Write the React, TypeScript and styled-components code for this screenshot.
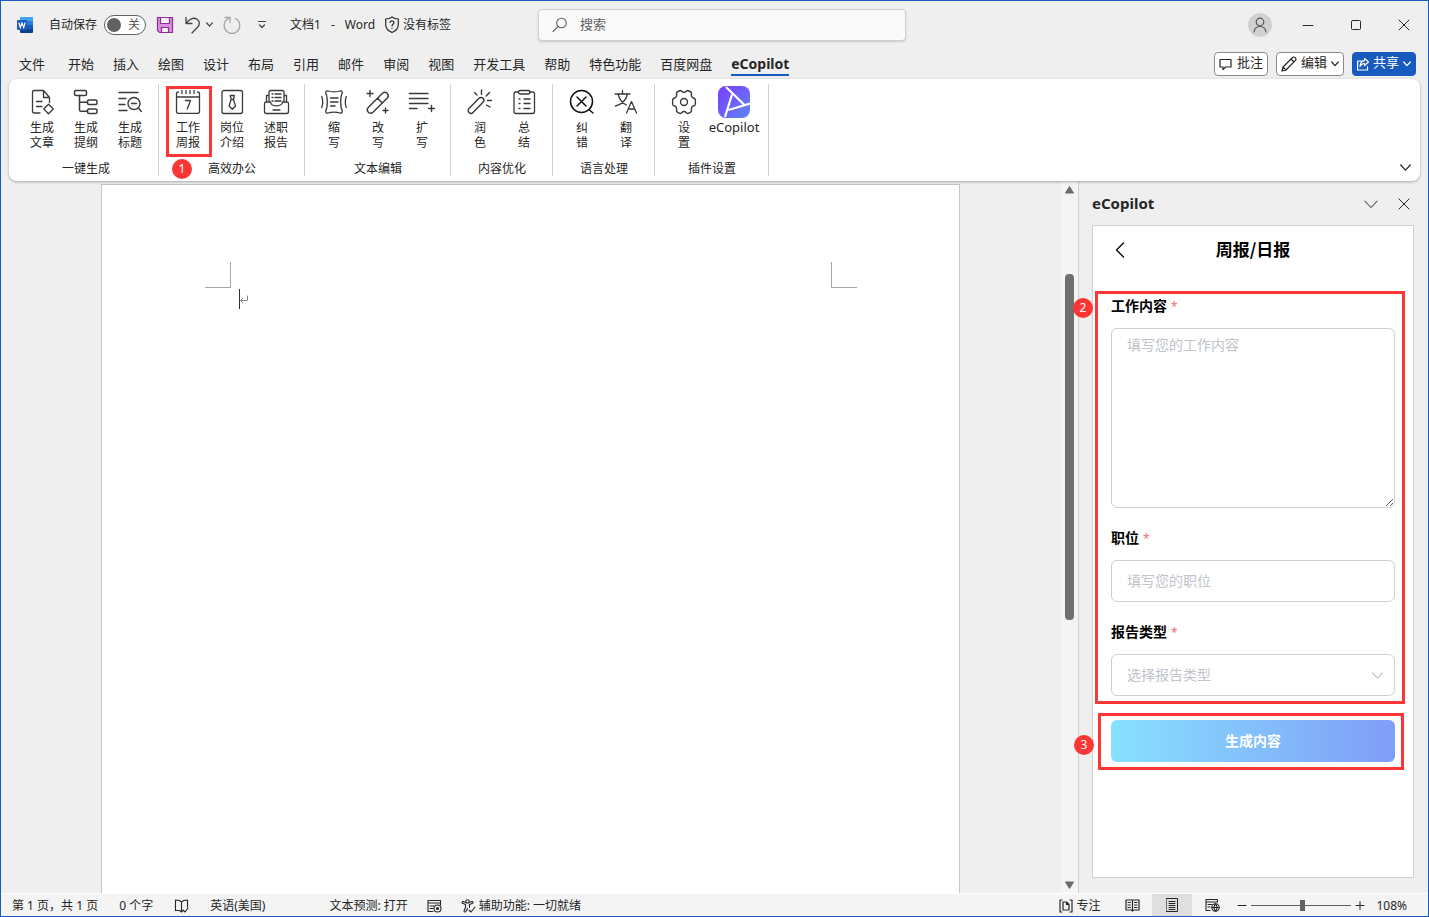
import React from "react";
import styled, { createGlobalStyle, css } from "styled-components";

const GlobalStyle = createGlobalStyle`
  *, *::before, *::after { box-sizing: border-box; }
  body {
    margin: 0;
    background: #efefef;
    color: #262626;
    font: 12px/16px "Noto Sans", "Noto Sans CJK SC", sans-serif;
  }
  button, input, textarea, select { font: inherit; color: inherit; }
  button { background: none; border: 0; padding: 0; cursor: pointer; }
  svg { display: block; flex: none; }
`;

const BLUE = "#185abd";
const RED = "#fc3535";

const Window = styled.div`
  height: 100vh;
  min-height: 560px;
  border: 1px solid ${BLUE};
  display: flex;
  flex-direction: column;
  overflow: hidden;
`;

const Icon = styled.svg<{ $w?: number }>`
  fill: none;
  stroke: currentColor;
  stroke-width: ${(p) => p.$w ?? 1};
  stroke-linecap: round;
  stroke-linejoin: round;
`;

/* Title bar */

const TitleBar = styled.header`
  display: flex;
  align-items: center;
  height: 47px;
  padding-left: 15px;
`;

const TitleSide = styled.div`
  flex: 1 0 0;
  display: flex;
  align-items: center;
  white-space: nowrap;
`;

const AutoSave = styled.label`
  display: flex;
  align-items: center;
  gap: 7px;
  margin-left: 15px;
`;

const Switch = styled.span`
  position: relative;
  display: flex;
  align-items: center;
  justify-content: flex-end;
  width: 42px;
  height: 20px;
  padding-right: 5px;
  border: 1px solid #616161;
  border-radius: 10px;
  background: #fff;
  color: #555;

  input {
    appearance: none;
    position: absolute;
    left: 2px;
    top: 2px;
    width: 14px;
    height: 14px;
    margin: 0;
    border-radius: 50%;
    background: #616161;
  }
`;

const QuickBar = styled.div`
  display: flex;
  align-items: center;
  gap: 10px;
  margin-left: 10px;
`;

const QuickButton = styled.button<{ $muted?: boolean }>`
  display: flex;
  align-items: center;
  justify-content: center;
  gap: 4px;
  min-width: 18px;
  height: 24px;
  color: ${(p) => (p.$muted ? "#a6a6a6" : "#444")};
`;

const DocTitle = styled.div`
  display: flex;
  align-items: center;
  gap: 10px;
  margin-left: 17px;
`;

const SensitivityLabel = styled.button`
  display: flex;
  align-items: center;
  gap: 4px;
`;

const SearchBox = styled.label`
  flex: 0 1 368px;
  display: flex;
  align-items: center;
  gap: 12px;
  height: 32px;
  padding: 0 13px;
  border: 1px solid #d1d1d1;
  border-radius: 4px;
  background: #fafafa;
  box-shadow: 0 1px 2px rgba(0, 0, 0, 0.16);
  color: #616161;

  input {
    flex: 1;
    min-width: 0;
    padding: 0 0 2px;
    border: 0;
    outline: 0;
    background: none;
    font-size: 13px;
  }
  input::placeholder { color: #616161; opacity: 1; }
`;

const Account = styled.button`
  display: grid;
  place-items: center;
  width: 24px;
  height: 24px;
  margin: 0 12px 0 auto;
  border-radius: 50%;
  background: #d1d1d1;
  color: #555;
`;

const WindowButton = styled.button`
  display: grid;
  place-items: center;
  width: 48px;
  height: 32px;
`;

/* Tabs */

const TabRow = styled.div`
  display: flex;
  align-items: center;
  justify-content: space-between;
  height: 31px;
  padding: 0 12px 0 18px;
`;

const Tabs = styled.nav`
  display: flex;
  gap: 19px;
  white-space: nowrap;
`;

const Tab = styled.a<{ $active?: boolean }>`
  padding: 5px 0 2px;
  border-bottom: 2px solid transparent;
  color: inherit;
  font-size: 13px;
  text-decoration: none;

  &:first-child { margin-right: 4px; }
  ${(p) =>
    p.$active &&
    css`
      border-color: ${BLUE};
      font-size: 14px;
      font-weight: 700;
    `}
`;

const Actions = styled.div`
  display: flex;
  gap: 8px;
`;

const ActionButton = styled.button<{ $primary?: boolean }>`
  display: flex;
  align-items: center;
  gap: 4px;
  height: 24px;
  padding: 0 4px;
  border: 1px solid ${(p) => (p.$primary ? BLUE : "#8a8a8a")};
  border-radius: 4px;
  background: ${(p) => (p.$primary ? BLUE : "#fff")};
  color: ${(p) => (p.$primary ? "#fff" : "#262626")};
  font-size: 13px;
  white-space: nowrap;

  span { padding-bottom: 3px; }
`;

/* Ribbon */

const Ribbon = styled.div`
  position: relative;
  z-index: 1;
  display: flex;
  height: 102px;
  margin: 0 8px;
  padding: 5px 9px 5px 4px;
  border-radius: 8px;
  background: #fff;
  box-shadow: 0 1px 3px rgba(0, 0, 0, 0.3);
`;

const Group = styled.section`
  display: flex;
  flex-direction: column;
  justify-content: space-between;
  padding: 2px 6px 0 7px;
  border-right: 1px solid #d1d1d1;
`;

const GroupTools = styled.div`
  display: flex;
  align-items: flex-start;
`;

const GroupName = styled.h2`
  margin: 0;
  font-size: 12px;
  font-weight: 400;
  line-height: 14px;
  text-align: center;
`;

const Tool = styled.button<{ $wide?: boolean }>`
  position: relative;
  display: flex;
  flex-direction: column;
  align-items: center;
  gap: 2px;
  width: ${(p) => (p.$wide ? 56 : 44)}px;
  font-size: ${(p) => (p.$wide ? 13 : 12)}px;
  line-height: 15px;
  white-space: pre-line;
`;

const ToolIcon = styled.span`
  display: grid;
  place-items: center;
  width: 32px;
  height: 32px;
  color: #3a3a3a;
`;

const Collapse = styled.button`
  align-self: flex-end;
  margin-left: auto;
  padding: 5px 0;
`;

/* Callouts */

const Frame = styled.span<{ $inset: string }>`
  position: absolute;
  inset: ${(p) => p.$inset};
  border: 3px solid ${RED};
  pointer-events: none;
`;

const Badge = styled.span<{ $left: number; $top: number }>`
  position: absolute;
  left: ${(p) => p.$left}px;
  top: ${(p) => p.$top}px;
  display: grid;
  place-items: center;
  width: 20px;
  height: 20px;
  border-radius: 50%;
  background: ${RED};
  color: #fff;
  font-family: "Noto Sans", sans-serif;
  font-size: 12px;
  font-weight: 400;
  line-height: 20px;
`;

/* Workspace */

const Workspace = styled.div`
  flex: 1;
  min-height: 0;
  display: flex;
`;

const Canvas = styled.main`
  flex: 1;
  min-width: 0;
  display: flex;
  justify-content: center;
  padding: 3px 1px 0 0;
`;

const Paper = styled.article`
  width: 859px;
  max-width: 100%;
  padding: 77px 102px 0 103px;
  border: 1px solid #c6c6c6;
  border-bottom: 0;
  background: #fff;
`;

const Margins = styled.div`
  display: flex;
  justify-content: space-between;
`;

const Corner = styled.span<{ $side: "left" | "right" }>`
  width: 26px;
  height: 26px;
  border-bottom: 1px solid #a6a6a6;
  border-${(p) => (p.$side === "left" ? "right" : "left")}: 1px solid #a6a6a6;
`;

const Paragraph = styled.p`
  display: flex;
  align-items: center;
  height: 20px;
  margin: 1px 0 0 34px;
  border-left: 1px solid #333;
  color: #8a8a8a;
`;

const Scrollbar = styled.div`
  display: flex;
  flex-direction: column;
  align-items: center;
  width: 17px;
  padding: 5px 0;
  background: #f4f4f4;
  color: #6b6b6b;
`;

const Track = styled.div`
  flex: 1;
  width: 9px;
  padding-top: 80px;
`;

const Thumb = styled.div`
  height: 57%;
  border-radius: 4px;
  background: #707070;
`;

const SidePane = styled.aside`
  display: flex;
  flex-direction: column;
  width: 350px;
  padding: 0 14px 16px 13px;
  border-left: 1px solid #d1d1d1;
`;

const PaneHeader = styled.div`
  display: flex;
  align-items: center;
  gap: 20px;
  height: 44px;
  padding-right: 4px;

  h1 {
    flex: 1;
    margin: 0;
    font-size: 15px;
    font-weight: 700;
    line-height: 20px;
  }
  button { padding-top: 2px; }
`;

const Card = styled.div`
  flex: 1;
  min-height: 0;
  padding: 0 18px;
  border: 1px solid #d1d1d1;
  background: #fff;
  color: #000;
  font-family: "Noto Sans CJK SC", sans-serif;
`;

const CardHeader = styled.div`
  display: grid;
  grid-template-columns: 20px 1fr 20px;
  align-items: center;
  height: 48px;
  margin-bottom: 22px;

  h2 {
    margin: 0;
    padding-bottom: 2px;
    font-size: 17px;
    line-height: 24px;
    text-align: center;
  }
`;

const Fields = styled.div`
  position: relative;
  display: grid;
  gap: 20px;
`;

const Field = styled.div`
  display: grid;
  gap: 14px;

  label {
    height: 18px;
    font-size: 14px;
    font-weight: 700;
    line-height: 18px;
  }
  label span {
    margin-left: 4px;
    color: #f56c6c;
    font-family: "Noto Sans", sans-serif;
    font-size: 12px;
    font-weight: 400;
  }
`;

const control = css`
  display: block;
  width: 100%;
  height: 42px;
  margin: 0;
  padding: 0 15px 2px;
  border: 1px solid #cfcfcf;
  border-radius: 6px;
  outline: 0;
  background: #fff;
  font-size: 14px;
  line-height: 20px;

  &::placeholder { color: #c0c4cc; opacity: 1; }
`;

const TextInput = styled.input`${control}`;

const TextArea = styled.textarea`
  ${control}
  height: 180px;
  padding: 5px 15px;
  resize: vertical;
`;

const SelectWrap = styled.div`
  position: relative;
  color: #c0c4cc;

  svg {
    position: absolute;
    right: 12px;
    top: 18px;
    pointer-events: none;
  }
`;

const Select = styled.select`
  ${control}
  appearance: none;
  color: #c0c4cc;
`;

const SubmitArea = styled.div`
  position: relative;
  margin-top: 24px;
`;

const Submit = styled.button`
  display: block;
  width: 100%;
  height: 42px;
  padding-bottom: 2px;
  border-radius: 6px;
  background: linear-gradient(90deg, #87e1ff, #809df8);
  color: #fff;
  font-size: 14px;
  font-weight: 700;
`;

/* Status bar */

const StatusBar = styled.footer`
  display: flex;
  align-items: center;
  height: 22px;
  padding: 0 21px 0 11px;
  background: #f4f4f4;
  box-shadow: 0 -1px 0 #fff;
  white-space: nowrap;
`;

const StatusGroup = styled.div<{ $gap: number; $push?: string }>`
  display: flex;
  align-items: center;
  gap: ${(p) => p.$gap}px;
  height: 100%;
  margin-left: ${(p) => p.$push ?? 0};
`;

const StatusButton = styled.button`
  display: flex;
  align-items: center;
  gap: 3px;
  padding-top: 1px;
`;

const ViewButton = styled.button<{ $active?: boolean }>`
  display: grid;
  place-items: center;
  width: 40px;
  height: 100%;
  background: ${(p) => (p.$active ? "#dfdfdf" : "transparent")};
`;

const Zoom = styled.input`
  appearance: none;
  width: 100px;
  height: 12px;
  margin: 0;
  background: linear-gradient(#616161, #616161) center / 100% 1px no-repeat;

  &::-webkit-slider-thumb {
    appearance: none;
    width: 5px;
    height: 11px;
    background: #616161;
  }
`;

const Chevron = ({ size = 7, w = 1.2 }: { size?: number; w?: number }) => (
  <Icon $w={w} width={size} height={size / 2 + 2} viewBox={`0 0 ${size} ${size / 2 + 2}`}>
    <path d={`M.7 1 ${size / 2} ${size / 2 + 0.6} ${size - 0.7} 1`} />
  </Icon>
);

const Cross = ({ size = 12 }: { size?: number }) => (
  <Icon width={size} height={size} viewBox="0 0 12 12">
    <path d="M1 1l10 10M11 1 1 11" />
  </Icon>
);

const ToolSvg = ({ children, w = 1.3 }: { children: React.ReactNode; w?: number }) => (
  <Icon $w={w} width={28} height={28} viewBox="0 0 28 28">
    {children}
  </Icon>
);

const icons = {
  article: (
    <ToolSvg>
      <path d="M12 25H6.200c-1 0-1.700-.7-1.700-1.700V4.200c0-1 .7-1.700 1.700-1.700h9.300l6 7v5M15.500 2.500v7h6M8.500 13.500h5.500M8.500 18.500h5.500M20.500 16.200l4.800 4.800-4.800 4.800-4.800-4.800z" />
    </ToolSvg>
  ),
  outline: (
    <ToolSvg w={1.5}>
      <rect x="2.500" y="2.500" width="12" height="5" rx="1.500" />
      <rect x="15.500" y="12" width="9.500" height="4.500" rx="1.500" />
      <rect x="15.500" y="21" width="9.500" height="4.500" rx="1.500" />
      <path d="M7.500 7.500V22c0 .8.500 1.300 1.300 1.300h6.700M7.500 14.300h8" />
    </ToolSvg>
  ),
  heading: (
    <ToolSvg w={1.4}>
      <path d="M3 4.500h19M3 10.500h7M3 16.500h6M3 22.500h8M22.500 20l2.800 3.500" />
      <circle cx="18" cy="15.500" r="6" />
      <path d="M15.500 15.500h5" />
    </ToolSvg>
  ),
  weekly: (
    <ToolSvg>
      <path d="M4.500 4c-1.300 0-2 .8-2 2v17.300c0 1.300.7 2 2 2h19c1.300 0 2-.7 2-2V6c0-1.200-.7-2-2-2M2.500 9h23M8 2.500v3M12 2.500v3M16 2.500v3M20 2.500v3M11.500 12.500h5l-3.300 8.500" />
    </ToolSvg>
  ),
  position: (
    <ToolSvg>
      <rect x="4" y="2.500" width="20.500" height="23" rx="2" />
      <path d="M12.300 7.500h4l-.8 4h-2.400zM13.100 11.500l-2 6.500 3.200 3.300 3.200-3.300-2-6.500" />
    </ToolSvg>
  ),
  report: (
    <ToolSvg>
      <path d="M7 14V4.500c0-1.200.7-2 2-2h11c1.300 0 2 .8 2 2V14M10 6h1M13 6h6M10 9.500h1M13 9.500h6M10 13h1M13 13h6M7 7.500H4.500v6.500M22 7.500h2.500v6.500M8.500 14H4c-1 0-1.500.6-1.500 1.500v8c0 1.200.8 2 2 2h20c1.200 0 2-.8 2-2v-8c0-.9-.5-1.500-1.500-1.500h-4.500c-.3 2.600-2.500 3.800-6 3.800s-5.700-1.200-6-3.800zM11 22h7" />
    </ToolSvg>
  ),
  shorten: (
    <ToolSvg>
      <path d="M8 3c3 1 9 1 12 0 1.500-.3 2.500.5 2.300 2-.8 1.500-1.600 3-1.600 9s.8 7.500 1.600 9c.2 1.500-.8 2.300-2.300 2-3-1-9-1-12 0-1.500.3-2.500-.5-2.300-2 .8-1.500 1.600-3 1.600-9s-.8-7.500-1.600-9C5.500 3.500 6.500 2.700 8 3zM10.500 10h7.500M10.500 14h7.500M10.500 18h4.500M1.700 8.500c1.300 3.500 1.300 7.500 0 11M26.300 8.500c-1.300 3.500-1.300 7.500 0 11" />
    </ToolSvg>
  ),
  rewrite: (
    <ToolSvg w={1.4}>
      <path d="M4.200 19.500 18.500 5.200a3.400 3.400 0 0 1 4.800 4.800L9 24.300a3.400 3.400 0 0 1-4.800-4.800zM13.500 10.200l4.800 4.800M6 2.500v6M3 5.500h6M21.500 20v5M19 22.500h5" />
    </ToolSvg>
  ),
  expand: (
    <ToolSvg w={1.4}>
      <path d="M1.500 5.500h18.500M1.500 10.500h18.500M1.500 15.500h18.500M1.500 20.500h7.500M23.500 17.500v6M20.500 20.500h6" />
    </ToolSvg>
  ),
  polish: (
    <ToolSvg w={1.400}>
      <path d="M3 20.500 13 10.300a2.800 2.800 0 0 1 4 4L7 24.500a2.800 2.800 0 0 1-4-4zM15.500 2v4.500M8.500 4.500l2.500 2.500M23.500 4.500l-3.300 3.500M21.500 12.500h4M20.500 17l3.500 2" />
    </ToolSvg>
  ),
  summary: (
    <ToolSvg>
      <path d="M8.500 4H6c-1.300 0-2 .8-2 2v17.500c0 1.200.7 2 2 2h16.500c1.300 0 2-.8 2-2V6c0-1.200-.7-2-2-2H20M9 11h1M14 11h6M9 15.500h1M14 15.500h6M9 20.500h1M14 20.500h6" />
      <rect x="8.500" y="2.500" width="11.500" height="3.500" rx="1.700" />
    </ToolSvg>
  ),
  proofread: (
    <ToolSvg w={1.5}>
      <circle cx="13.500" cy="13.500" r="11" stroke="#111" />
      <path d="M9 9l9 9M18 9l-9 9M21 21.500l4 3.500" stroke="#111" />
    </ToolSvg>
  ),
  translate: (
    <ToolSvg w={1.3}>
      <path d="M3 6h15M10.500 2.500V6M6 6c1.500 6 5 9.500 8.500 11M15.500 6C14 12.500 9 16.500 3.500 18M14.500 25l5-11.500L24.500 25M16.200 21h6.600" />
    </ToolSvg>
  ),
  settings: (
    <ToolSvg w={1.4}>
      <path d="M10.500 2.500c1 0 1.500 2 3.500 2s2.500-2 3.500-2c1.500.3 2.800 1 3.800 2 .7.900-.6 2.500.4 4.200s3 1.400 3.400 2.400c.5 1.900.5 3.900 0 5.800-.4 1-2.400.7-3.400 2.400s.3 3.300-.4 4.200c-1 1-2.300 1.700-3.800 2-1 0-1.500-2-3.500-2s-2.500 2-3.500 2c-1.500-.3-2.800-1-3.800-2-.7-.9.6-2.500-.4-4.200s-3-1.400-3.400-2.400c-.5-1.900-.5-3.900 0-5.800.4-1 2.400-.7 3.400-2.400s-.3-3.300.4-4.200c1-1 2.300-1.700 3.800-2z" />
      <circle cx="14" cy="14" r="3.500" />
    </ToolSvg>
  ),
  ecopilot: (
    <svg width="32" height="32" viewBox="0 0 32 32">
      <defs>
        <linearGradient id="brand" x1="0" y1="0" x2="1" y2="1">
          <stop offset="0" stopColor="#7a3cfa" />
          <stop offset="1" stopColor="#5f86f8" />
        </linearGradient>
      </defs>
      <rect width="32" height="32" rx="8" fill="url(#brand)" />
      <path d="M8 1l19 18.500M14 8.500 7 31M10.500 24 32 17.500" fill="none" stroke="#fff" strokeWidth="2.200" />
    </svg>
  ),
};

type ToolSpec = { label: string; icon: keyof typeof icons; wide?: boolean; step?: number };

const groups: { name: string; tools: ToolSpec[] }[] = [
  {
    name: "一键生成",
    tools: [
      { label: "生成\n文章", icon: "article" },
      { label: "生成\n提纲", icon: "outline" },
      { label: "生成\n标题", icon: "heading" },
    ],
  },
  {
    name: "高效办公",
    tools: [
      { label: "工作\n周报", icon: "weekly", step: 1 },
      { label: "岗位\n介绍", icon: "position" },
      { label: "述职\n报告", icon: "report" },
    ],
  },
  {
    name: "文本编辑",
    tools: [
      { label: "缩\n写", icon: "shorten" },
      { label: "改\n写", icon: "rewrite" },
      { label: "扩\n写", icon: "expand" },
    ],
  },
  {
    name: "内容优化",
    tools: [
      { label: "润\n色", icon: "polish" },
      { label: "总\n结", icon: "summary" },
    ],
  },
  {
    name: "语言处理",
    tools: [
      { label: "纠\n错", icon: "proofread" },
      { label: "翻\n译", icon: "translate" },
    ],
  },
  {
    name: "插件设置",
    tools: [
      { label: "设\n置", icon: "settings" },
      { label: "eCopilot", icon: "ecopilot", wide: true },
    ],
  },
];

const tabs = [
  "文件", "开始", "插入", "绘图", "设计", "布局", "引用", "邮件",
  "审阅", "视图", "开发工具", "帮助", "特色功能", "百度网盘", "eCopilot",
];

const WordLogo = () => (
  <svg width="18" height="18" viewBox="0 0 18 18">
    <path d="M5 1h11a1 1 0 0 1 1 1v3.500H4V2a1 1 0 0 1 1-1z" fill="#41a5ee" />
    <path d="M4 5h13v4H4z" fill="#2b7cd3" />
    <path d="M4 9h13v4H4z" fill="#185abd" />
    <path d="M4 13h13v3a1 1 0 0 1-1 1H5a1 1 0 0 1-1-1z" fill="#103f91" />
    <rect x="1" y="4" width="10" height="10" rx="1" fill="#185abd" />
    <path d="M2.800 6.500 4.300 11.500 6 7l1.700 4.500 1.500-5" fill="none" stroke="#fff" strokeWidth="1.200" />
  </svg>
);

export default function App() {
  return (
    <Window>
      <GlobalStyle />
      <TitleBar>
        <TitleSide>
          <WordLogo />
          <AutoSave>
            自动保存
            <Switch>
              <input type="checkbox" role="switch" />关
            </Switch>
          </AutoSave>
          <QuickBar>
            <QuickButton aria-label="保存">
              <svg width="18" height="18" viewBox="0 0 18 18" fill="#d98fdc" stroke="#8e2f99" strokeWidth="1.200">
                <path d="M1.500 1.500h15v15h-13l-2-2z" />
                <path d="M4.500 1.500h9v6h-9z" fill="#f3f0f3" />
                <path d="M5.500 16.500v-5h7v5z" fill="#f3f0f3" />
              </svg>
            </QuickButton>
            <QuickButton aria-label="撤消">
              <Icon $w={1.300} width="18" height="18" viewBox="0 0 18 18">
                <path d="M2 1.500v6h6M2.300 7.200C5 3 9.500 1 13 3.200c3.200 2.200 2.800 5.800.5 8L8 17" />
              </Icon>
              <Chevron />
            </QuickButton>
            <QuickButton $muted aria-label="重复">
              <Icon $w={1.300} width="18" height="18" viewBox="0 0 18 18">
                <path d="M2 1.500h5v5M6.800 2C3 3.500 1 6.500 1.200 9.700a7.800 7.800 0 0 0 15.600 0c0-3-1.500-5.700-4.300-7" />
              </Icon>
            </QuickButton>
            <QuickButton aria-label="自定义快速访问工具栏">
              <Icon $w={1.200} width="22" height="9" viewBox="0 0 22 9">
                <path d="M7.500 1.500h7M8.500 5l2.500 2.500L13.500 5" />
              </Icon>
            </QuickButton>
          </QuickBar>
          <DocTitle>
            <span>文档1</span>
            <span>-</span>
            <span>Word</span>
            <SensitivityLabel>
              <Icon $w={1.200} width="14" height="18" viewBox="0 0 14 18">
                <path d="M7 1c2 1.500 4 2 6.300 2v5.500c0 4-2.500 6.500-6.300 8-3.800-1.500-6.300-4-6.300-8V3C3 3 5 2.500 7 1zM5 6.500C5.200 4.200 9 4.300 9 6.600c0 1.700-2 1.700-2 3.400M7 12.300v.2" />
              </Icon>
              没有标签
            </SensitivityLabel>
          </DocTitle>
        </TitleSide>
        <SearchBox>
          <Icon $w={1.100} width="16" height="16" viewBox="0 0 16 16">
            <circle cx="9.500" cy="6" r="4.800" />
            <path d="M6 9.500 1 14.700" />
          </Icon>
          <input type="search" placeholder="搜索" aria-label="搜索" />
        </SearchBox>
        <TitleSide>
          <Account aria-label="帐户">
            <Icon $w={1.200} width="14" height="16" viewBox="0 0 14 16">
              <circle cx="7" cy="5" r="3.800" />
              <path d="M1 15c.5-3.500 2.500-5.500 6-5.500s5.500 2 6 5.500" />
            </Icon>
          </Account>
          <WindowButton aria-label="最小化">
            <Icon width="12" height="12" viewBox="0 0 12 12"><path d="M1 6.500h10" /></Icon>
          </WindowButton>
          <WindowButton aria-label="最大化">
            <Icon width="12" height="12" viewBox="0 0 12 12"><rect x="1.500" y="1.500" width="9" height="9" rx="1" /></Icon>
          </WindowButton>
          <WindowButton aria-label="关闭"><Cross /></WindowButton>
        </TitleSide>
      </TitleBar>

      <TabRow>
        <Tabs>
          {tabs.map((t) => (
            <Tab key={t} href="#" $active={t === "eCopilot"}>{t}</Tab>
          ))}
        </Tabs>
        <Actions>
          <ActionButton>
            <Icon $w={1.200} width="14" height="14" viewBox="0 0 14 14">
              <path d="M1 2.500h11v7.500H6.500L4 12.500V10H1z" />
            </Icon>
            <span>批注</span>
          </ActionButton>
          <ActionButton>
            <Icon $w={1.200} width="16" height="16" viewBox="0 0 16 16">
              <path d="M1 15l1-4L11.800 1.300c1.800-1 3.900 1 2.900 2.900L5 14zM10 3l3 3M2 11l3 3" />
            </Icon>
            <span>编辑</span> <Chevron size={8} />
          </ActionButton>
          <ActionButton $primary>
            <Icon $w={1.200} width="12" height="14" viewBox="0 0 12 14">
              <path d="M4.500 4H.6v9h9.900V9.500M7.500 1.500 11.500 5l-4 3.500V6.500c-2 0-3.500 1-4.500 3C3.200 6 5 4 7.500 3.700z" />
            </Icon>
            <span>共享</span> <Chevron size={8} />
          </ActionButton>
        </Actions>
      </TabRow>

      <Ribbon>
        {groups.map((g) => (
          <Group key={g.name}>
            <GroupTools>
              {g.tools.map((t) => (
                <Tool key={t.label} $wide={t.wide}>
                  <ToolIcon>{icons[t.icon]}</ToolIcon>
                  {t.label}
                  {t.step && (
                    <>
                      <Frame $inset="0 -2px -7px 0" />
                      <Badge $left={6} $top={73}>{t.step}</Badge>
                    </>
                  )}
                </Tool>
              ))}
            </GroupTools>
            <GroupName>{g.name}</GroupName>
          </Group>
        ))}
        <Collapse aria-label="折叠功能区"><Chevron size={11} /></Collapse>
      </Ribbon>

      <Workspace>
        <Canvas>
          <Paper>
            <Margins>
              <Corner $side="left" />
              <Corner $side="right" />
            </Margins>
            <Paragraph>
              <Icon width="9" height="9" viewBox="0 0 9 9">
                <path d="M7.500 1v4.500H.5M3 3 .5 5.500 3 8" />
              </Icon>
            </Paragraph>
          </Paper>
        </Canvas>
        <Scrollbar>
          <svg width="9" height="8" viewBox="0 0 9 8"><path d="M4.500.5 8.500 7h-8z" fill="currentColor" stroke="currentColor" strokeLinejoin="round" /></svg>
          <Track><Thumb /></Track>
          <svg width="9" height="8" viewBox="0 0 9 8"><path d="M4.500 7.500 8.500 1h-8z" fill="currentColor" stroke="currentColor" strokeLinejoin="round" /></svg>
        </Scrollbar>
        <SidePane>
          <PaneHeader>
            <h1>eCopilot</h1>
            <button aria-label="窗格选项"><Chevron size={14} w={1} /></button>
            <button aria-label="关闭窗格"><Cross /></button>
          </PaneHeader>
          <Card>
            <CardHeader>
              <button aria-label="返回">
                <Icon $w={1.300} width="18" height="16" viewBox="0 0 18 16"><path d="M12.500 1 5.500 8l7 7" /></Icon>
              </button>
              <h2>周报/日报</h2>
            </CardHeader>
            <form onSubmit={(e) => e.preventDefault()}>
              <Fields>
                <Field>
                  <label htmlFor="content">工作内容<span>*</span></label>
                  <TextArea id="content" placeholder="填写您的工作内容" />
                </Field>
                <Field>
                  <label htmlFor="job">职位<span>*</span></label>
                  <TextInput id="job" placeholder="填写您的职位" />
                </Field>
                <Field>
                  <label htmlFor="kind">报告类型<span>*</span></label>
                  <SelectWrap>
                    <Select id="kind" defaultValue="">
                      <option value="">选择报告类型</option>
                    </Select>
                    <Chevron size={11} />
                  </SelectWrap>
                </Field>
                <Frame $inset="-5px -10px -8px -16px" />
                <Badge $left={-38} $top={2}>2</Badge>
              </Fields>
              <SubmitArea>
                <Submit>生成内容</Submit>
                <Frame $inset="-7px -9px -8px -13px" />
                <Badge $left={-37} $top={15}>3</Badge>
              </SubmitArea>
            </form>
          </Card>
        </SidePane>
      </Workspace>

      <StatusBar>
        <StatusGroup $gap={21}>
          <StatusButton>第 1 页，共 1 页</StatusButton>
          <StatusButton>0 个字</StatusButton>
          <StatusButton aria-label="校对">
            <Icon $w={1.100} width="15" height="14" viewBox="0 0 15 14">
              <path d="M7.500 12.500V3C6 1.200 3.500 1 1.500 1v10.500h4L7.500 13l1-1M7.500 3C9 1.200 11.500 1 13.500 1v7M9 11l2 2 3-4" />
            </Icon>
          </StatusButton>
          <StatusButton>英语(美国)</StatusButton>
        </StatusGroup>
        <StatusGroup $gap={19} $push="64px">
          <StatusButton>文本预测: 打开</StatusButton>
          <StatusButton aria-label="宏">
            <Icon $w={1.100} width="15" height="14" viewBox="0 0 15 14">
              <path d="M6 12.500H1v-11h12.500V6M1 4h12.500M3 7h4M3 9.500h3" />
              <circle cx="10.500" cy="9.500" r="3.500" />
              <circle cx="10.500" cy="9.500" r="1" fill="currentColor" />
            </Icon>
          </StatusButton>
          <StatusButton>
            <Icon $w={1.100} width="15" height="14" viewBox="0 0 15 14">
              <circle cx="6.500" cy="2.500" r="1.700" />
              <path d="M4.800 3.500 2 2.500C.8 2.500.7 4 1.500 4.300L4.500 5.500v3L3 12c0 1.200 1.300 1.300 1.800.5L6.500 9.500M8.200 3.500 11 2.500c1.200 0 1.300 1.500.5 1.800L8.500 5.500v3M8 11l2 2 4-5" />
            </Icon>
            辅助功能: 一切就绪
          </StatusButton>
        </StatusGroup>
        <StatusGroup $gap={0} $push="auto">
          <StatusButton>
            <Icon $w={1.200} width="14" height="14" viewBox="0 0 14 14">
              <path d="M3 1H1v12h2M11 1h2v12h-2M4 3h3.500L10 5.500V11H4zM7.500 3v2.500H10" />
            </Icon>
            专注
          </StatusButton>
        </StatusGroup>
        <StatusGroup $gap={0} $push="12px">
          <ViewButton aria-label="阅读视图">
            <Icon $w={1.200} width="15" height="14" viewBox="0 0 15 14">
              <path d="M7.500 2v11M7.500 2H1v10h5.500l1 1 1-1H14V2zM3 4.500h2.500M3 7h2.500M3 9.500h2.500M9.500 4.500H12M9.500 7H12M9.500 9.500H12" />
            </Icon>
          </ViewButton>
          <ViewButton $active aria-label="页面视图">
            <Icon width="12" height="14" viewBox="0 0 12 14">
              <path d="M.5.500h11v13H.5zM3 3.500h6M3 5.500h6M3 7.500h6M3 9.500h6M3 11.500h6" />
            </Icon>
          </ViewButton>
          <ViewButton aria-label="Web 版式视图">
            <Icon $w={1.100} width="15" height="14" viewBox="0 0 15 14">
              <path d="M5 12.500H1v-11h11.500V4M1 4h11M3 6.500h4M3 9h2" />
              <circle cx="10.500" cy="9.500" r="3.700" />
              <path d="M7 9.500h7M10.500 6c-2 2-2 5 0 7M10.500 6c2 2 2 5 0 7" />
            </Icon>
          </ViewButton>
        </StatusGroup>
        <StatusGroup $gap={4} $push="5px">
          <button aria-label="缩小">
            <Icon width="10" height="10" viewBox="0 0 10 10"><path d="M1 5.500h8" /></Icon>
          </button>
          <Zoom type="range" min="10" max="194" defaultValue="104" aria-label="缩放" />
          <button aria-label="放大">
            <Icon width="10" height="10" viewBox="0 0 10 10"><path d="M1 5.500h8M5 1.500v8" /></Icon>
          </button>
        </StatusGroup>
        <StatusGroup $gap={0} $push="11px">
          <StatusButton>108%</StatusButton>
        </StatusGroup>
      </StatusBar>
    </Window>
  );
}
